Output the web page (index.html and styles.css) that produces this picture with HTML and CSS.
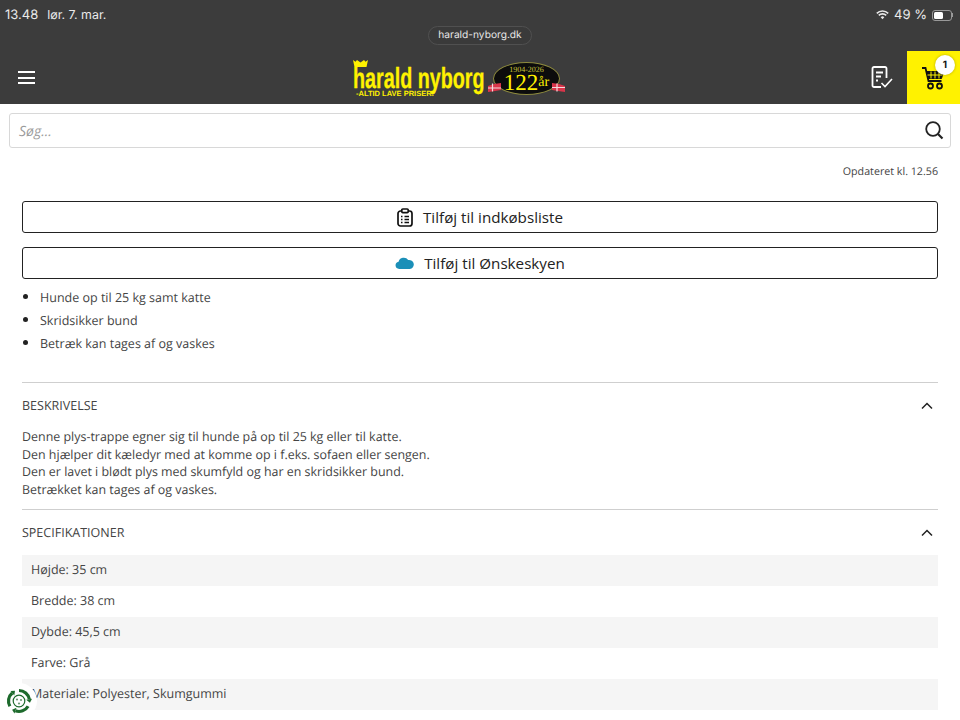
FILE: index.html
```html
<!DOCTYPE html>
<html lang="da">
<head>
<meta charset="utf-8">
<title>Harald Nyborg</title>
<link rel="stylesheet" href="styles.css">
</head>
<body>
<header class="top">
  <div class="status">
    <div class="status-left"><span>13.48</span><span>lør. 7. mar.</span></div>
    <div class="status-right">
      <svg class="wifi" width="13" height="10" viewBox="0 0 13 10"><path d="M0.8 3.4a8 8 0 0 1 11.4 0" fill="none" stroke="#e8e8e8" stroke-width="1.6"/><path d="M2.8 5.4a5.2 5.2 0 0 1 7.4 0" fill="none" stroke="#e8e8e8" stroke-width="1.6"/><path d="M4.7 7.2a2.6 2.6 0 0 1 3.6 0L6.5 9.2z" fill="#e8e8e8"/></svg>
      <span>49 %</span>
      <span class="battery"><span class="battery-fill"></span></span>
      <span class="battery-cap"></span>
    </div>
  </div>
  <div class="url-row"><span class="url">harald-nyborg.dk</span></div>
  <div class="nav">
    <button class="burger" aria-label="Menu"><span></span><span></span><span></span></button>
    <div class="logo">
      <div class="wordmark">
        <svg class="crown" width="15" height="7" viewBox="0 0 15 7"><path d="M0 0l2.500 1.800L4 0l3.500 2.500L11 0l1.500 1.800L15 0l-1.500 7h-12z" fill="#fff200"/></svg>
        <span class="brand">harald nyborg</span>
        <span class="slogan">-ALTID LAVE PRISER!</span>
      </div>
      <div class="badge">
        <svg class="flag flag-l" width="13" height="9" viewBox="0 0 13 9"><path d="M0 3l6-2 7-1v7l-6 1-7 1z" fill="#d8354a"/><path d="M4.500 0.500v8M0 5h13" stroke="#f3d9dc" stroke-width="1.200"/></svg>
        <div class="oval"><span class="years">1904-2026</span><span class="age">122<sup>år</sup></span></div>
        <svg class="flag flag-r" width="13" height="9" viewBox="0 0 13 9"><path d="M0 0l7 1 6 2v6l-7-1-6-1z" fill="#d8354a"/><path d="M5 0.500v8M0 4.500h13" stroke="#f3d9dc" stroke-width="1.200"/></svg>
      </div>
    </div>
    <div class="nav-right">
      <svg class="list-icon" width="22" height="23" viewBox="0 0 22 23" fill="none" stroke="#fff" stroke-width="1.8"><path d="M10 21H3a1.5 1.5 0 0 1-1.5-1.5v-17A1.5 1.5 0 0 1 3 1h11a1.5 1.5 0 0 1 1.5 1.500V12"/><path d="M5 6.500h7M5 10.500h5M5 14.500h2"/><path d="M10.500 17l3.500 3.500 7-7.500" stroke-width="1.600"/></svg>
      <div class="cart">
        <svg width="24" height="24" viewBox="0 0 24 24" fill="none" stroke="#111"><path d="M1 2h3.500l3 13h13" stroke-width="1.800"/><path d="M5.500 5.500h17l-2 7H7.500z" fill="#111" stroke-width="1"/><path d="M10 5.500v7M14 5.500v7M18 5.500v7M6.500 9h15" stroke="#fff200" stroke-width="1"/><circle cx="9.500" cy="20" r="2.500" stroke-width="1.800"/><circle cx="18.500" cy="20" r="2.500" stroke-width="1.800"/></svg>
        <span class="count">1</span>
      </div>
    </div>
  </div>
</header>

<div class="search-wrap">
  <div class="search">
    <span class="placeholder">Søg...</span>
    <svg class="search-icon" width="20" height="20" viewBox="0 0 20 20" fill="none" stroke="#222" stroke-width="1.800"><circle cx="9" cy="9" r="6.800"/><path d="M14 14l4.500 4.500" stroke-width="2.200"/></svg>
  </div>
</div>

<main class="content">
  <div class="updated">Opdateret kl. 12.56</div>
  <button class="action first">
    <svg width="16" height="19" viewBox="0 0 16 19" fill="none" stroke="#111" stroke-width="1.700"><rect x="1" y="3" width="14" height="15" rx="2.500"/><rect x="4.800" y="1" width="6.400" height="3.600" rx="1" fill="#fff"/><path d="M4 8.500h1.500M7.500 8.500H12M4 11.500h1.500M7.500 11.500H12M4 14.500h1.500M7.500 14.500H12" stroke-width="1.400"/></svg>
    <span>Tilføj til indkøbsliste</span>
  </button>
  <button class="action">
    <svg width="19" height="12" viewBox="0 0 18 12" preserveAspectRatio="none"><path d="M4 12a3.700 3.700 0 0 1-.6-7.300A5 5 0 0 1 12.500 3a4.500 4.500 0 0 1 1.500 9z" fill="#1b8fb8"/></svg>
    <span>Tilføj til Ønskeskyen</span>
  </button>

  <ul class="bullets">
    <li>Hunde op til 25 kg samt katte</li>
    <li>Skridsikker bund</li>
    <li>Betræk kan tages af og vaskes</li>
  </ul>

  <section class="panel desc">
    <div class="panel-head"><span>BESKRIVELSE</span><svg width="12" height="8" viewBox="0 0 12 8" fill="none" stroke="#222" stroke-width="1.500"><path d="M1 6.500l5-5 5 5"/></svg></div>
    <p>Denne plys-trappe egner sig til hunde på op til 25 kg eller til katte.<br>Den hjælper dit kæledyr med at komme op i f.eks. sofaen eller sengen.<br>Den er lavet i blødt plys med skumfyld og har en skridsikker bund.<br>Betrækket kan tages af og vaskes.</p>
  </section>

  <section class="panel">
    <div class="panel-head"><span>SPECIFIKATIONER</span><svg width="12" height="8" viewBox="0 0 12 8" fill="none" stroke="#222" stroke-width="1.500"><path d="M1 6.500l5-5 5 5"/></svg></div>
    <div class="spec">Højde: 35 cm</div>
    <div class="spec">Bredde: 38 cm</div>
    <div class="spec">Dybde: 45,5 cm</div>
    <div class="spec">Farve: Grå</div>
    <div class="spec">Materiale: Polyester, Skumgummi</div>
  </section>
</main>

<div class="eco">
  <svg width="26" height="26" viewBox="0 0 26 26" fill="none">
    <g transform="rotate(-20 13 13)">
      <g stroke="#1d6a2c" stroke-width="3.200" fill="none">
        <path d="M16.600 3.130A10.500 10.500 0 0 1 23.340 14.820"/>
        <path d="M16.600 3.130A10.500 10.500 0 0 1 23.340 14.820" transform="rotate(120 13 13)"/>
        <path d="M16.600 3.130A10.500 10.500 0 0 1 23.340 14.820" transform="rotate(240 13 13)"/>
      </g>
      <g fill="#1d6a2c">
        <path d="M26 15.300l-5.800-1 2.500 4z"/>
        <path d="M26 15.300l-5.800-1 2.500 4z" transform="rotate(120 13 13)"/>
        <path d="M26 15.300l-5.800-1 2.500 4z" transform="rotate(240 13 13)"/>
      </g>
    </g>
    <circle cx="13" cy="13" r="5.800" fill="#fff" stroke="#1d6a2c" stroke-width="1.200"/>
    <circle cx="11" cy="11.500" r="1.100" fill="#6f9a76"/>
    <circle cx="15" cy="12" r="1.100" fill="#6f9a76"/>
    <circle cx="13" cy="15.500" r="1.100" fill="#6f9a76"/>
  </svg>
</div>
</body>
</html>
```
FILE: styles.css
```css
* { box-sizing: border-box; }
html, body { margin: 0; padding: 0; }
body {
  width: 960px;
  height: 720px;
  overflow: hidden;
  background: #fff;
  font-family: "Open Sans", "Liberation Sans", sans-serif;
  color: #333;
  position: relative;
  text-rendering: geometricPrecision;
}
.top { background: #3c3c3c; height: 104px; color: #eee; display: flex; flex-direction: column; }
.status {
  height: 26px;
  padding: 6px 7px 0 5px;
  display: flex;
  justify-content: space-between;
  font-family: Inter, "Liberation Sans", sans-serif;
  font-size: 13px;
  line-height: 18px;
  color: #eaeaea;
}
.status-left { display: flex; gap: 9px; }
.status-left span:last-child { font-size: 12.400px; }
.status-right { display: flex; align-items: center; gap: 4px; height: 18px; }
.wifi { margin-right: 1px; }
.battery {
  width: 20px; height: 11px; margin-left: 1px;
  border: 1px solid #999; border-radius: 3px; padding: 1px; display: block;
}
.battery-fill { display: block; width: 9px; height: 100%; background: #fff; border-radius: 1.500px; }
.battery-cap { width: 1px; height: 4px; background: #999; margin-left: -4px; }
.url-row { height: 20px; display: flex; justify-content: center; }
.url {
  height: 19px;
  padding: 0 9px;
  border: 1px solid #505050;
  border-radius: 10px;
  font-family: Inter, "Liberation Sans", sans-serif;
  font-size: 10.200px;
  line-height: 17px;
  color: #e6e6e6;
  background: #3a3a3a;
}
.nav { flex: 1; display: flex; align-items: center; justify-content: space-between; padding-left: 18px; position: relative; margin-top: 5px; }
.burger {
  width: 17px; height: 13px; padding: 0; border: 0; background: none;
  display: flex; flex-direction: column; justify-content: space-between;
}
.burger span { display: block; height: 2px; background: #fff; }
.logo { position: absolute; left: 353px; top: 3px; display: flex; align-items: flex-start; gap: 2px; }
.wordmark { width: 133px; height: 44px; position: relative; }
.crown { position: absolute; left: 0; top: 6px; }
.brand {
  position: absolute; left: 0; top: 15px;
  font-family: "Liberation Sans", sans-serif;
  font-weight: 700;
  font-size: 29px;
  line-height: 20px;
  color: #fff200;
  white-space: nowrap;
  transform: scaleX(.68);
  transform-origin: left center;
  -webkit-text-stroke: .3px #fff200;
}
.slogan {
  position: absolute; left: 3px; top: 36px;
  font-family: "Liberation Sans", sans-serif;
  font-weight: 700;
  font-size: 7.500px;
  line-height: 8px;
  color: #fff200;
  white-space: nowrap;
}
.badge { width: 78px; height: 36px; position: relative; margin-top: 8px; }
.oval {
  position: absolute; left: 5px; top: 0; width: 67px; height: 33px;
  border-radius: 50%; background: #0c0c0c; border: 1px solid #8d8a3e;
  display: flex; flex-direction: column; align-items: center;
  font-family: "Liberation Serif", serif; color: #fff200;
}
.years { font-size: 8px; line-height: 7px; margin-top: 3px; color: #c9c43b; }
.age { font-size: 23px; line-height: 20px; }
.age sup { font-size: 14px; line-height: 0; vertical-align: 4px; }
.flag { position: absolute; top: 21px; z-index: 1; }
.flag-l { left: 0; }
.flag-r { left: 64px; }
.nav-right { display: flex; align-items: center; height: 100%; gap: 14px; }
.cart { width: 53px; height: 100%; background: #fff200; position: relative; display: flex; align-items: center; justify-content: center; padding: 0 1px 0 0; }
.count {
  position: absolute; left: 28px; top: 4px;
  width: 20px; height: 20px; border-radius: 50%;
  background: #fff; color: #111;
  font-family: Inter, "Liberation Sans", sans-serif;
  font-size: 10px; font-weight: 700; line-height: 20px; text-align: center;
  box-shadow: 0 0 3px rgba(0,0,0,.3);
}
.search-wrap { padding: 9px 9px 0; }
.search {
  height: 35px;
  border: 1px solid #d8d8d8;
  border-radius: 3px;
  display: flex; align-items: center; justify-content: space-between;
  padding: 0 6px 0 9px;
}
.placeholder { font-style: italic; font-size: 14px; color: #9b9b9b; margin-top: 2px; }
.search-icon { margin-top: -2px; }
.content { padding: 16px 22px 0; }
.updated { text-align: right; font-size: 10.700px; line-height: 16px; color: #444; }
.action {
  width: 100%; height: 32px;
  background: #fff; border: 1px solid #222; border-radius: 3px;
  display: flex; align-items: center; justify-content: center; gap: 10px;
  font-family: "Open Sans", sans-serif;
  font-size: 15.200px; color: #222; padding: 0;
  margin-top: 14px;
}
.action.first { margin-top: 21px; }
.bullets { margin: 0; padding: 7px 0 0 18px; font-size: 12.500px; line-height: 23px; color: #444; height: 103px; }
.bullets li { height: 23px; }
.bullets li::marker { font-size: 15px; color: #222; }
.panel { border-top: 1px solid #cfcfcf; }
.panel-head {
  height: 45px;
  display: flex; align-items: center; justify-content: space-between;
  padding-right: 5px;
  font-size: 12.500px; color: #444;
}
.desc { height: 127px; }
.desc p { margin: 0; font-size: 12.450px; line-height: 17.700px; color: #444; }
.spec { height: 31px; padding-left: 9px; font-size: 12.500px; line-height: 30px; color: #444; }
.panel .spec:nth-child(even) { background: #f5f5f5; }
.eco { position: absolute; left: 1px; top: 683px; width: 36px; height: 36px; background: #fff; border-radius: 50%; display: flex; align-items: center; justify-content: center; }
```
